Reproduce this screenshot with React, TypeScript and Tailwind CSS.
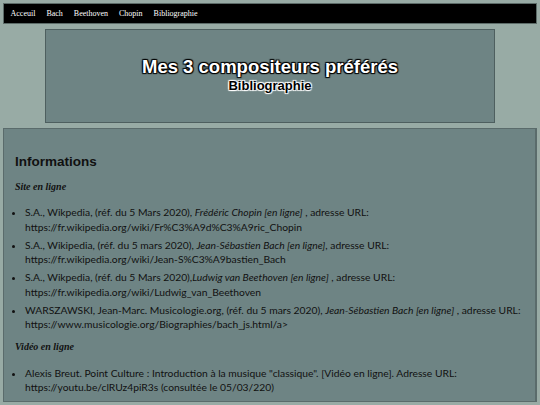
import React from "react";

export default function App() {
  const navItems = ["Acceuil", "Bach", "Beethoven", "Chopin", "Bibliographie"];
  return (
    <div className="w-[540px] h-[405px] overflow-hidden bg-[#98aba5] p-[3px] flex flex-col gap-[5px]">
      <nav className="h-[21px] bg-black border border-[#5c6b68] flex items-center px-[1px] font-['Liberation_Serif',serif] text-[8px] text-white shrink-0">
        {navItems.map((n) => (
          <span key={n} className="px-[5.5px]">
            {n}
          </span>
        ))}
      </nav>
      <header className="mx-auto w-[450px] h-[94px] bg-[#6e8484] border border-[#4e5f5f] flex flex-col items-center justify-center shrink-0 font-['Liberation_Sans',Arial,sans-serif] font-bold">
        <h1 className="-mt-[1px] text-[18.5px] leading-[20px] text-white [text-shadow:-1px_-1px_1px_#000,1px_-1px_1px_#000,-1px_1px_1px_#000,1px_1px_1px_#000]">
          Mes 3 compositeurs préférés
        </h1>
        <h2 className="text-[13px] leading-[18px] text-black [text-shadow:-1px_-1px_1px_#fff,1px_-1px_1px_#fff,-1px_1px_1px_#fff,1px_1px_1px_#fff]">
          Bibliographie
        </h2>
      </header>
      <main className="flex-1 bg-[#6e8484] border border-[#5a6b6b] border-r-2 px-[11px] pt-[24px] text-[#111]">
        <h3 className="font-['Liberation_Sans',Arial,sans-serif] font-bold text-[13.5px] leading-[18px]">
          Informations
        </h3>
        <h4 className="mt-[10px] font-['Liberation_Serif',serif] font-bold italic text-[10px] leading-[12px]">
          Site en ligne
        </h4>
        <ul className="mt-[12px] list-disc pl-[10px] whitespace-nowrap font-['Lato',sans-serif] text-[10.3px] leading-[14.5px] flex flex-col gap-[3.5px]">
          <li>
            S.A., Wikpedia, (réf. du 5 Mars 2020), <i>Frédéric Chopin [en ligne]</i> , adresse URL:
            <br />
            https://fr.wikipedia.org/wiki/Fr%C3%A9d%C3%A9ric_Chopin
          </li>
          <li>
            S.A., Wikipedia, (réf. du 5 mars 2020), <i>Jean-Sébastien Bach [en ligne]</i>, adresse URL:
            <br />
            https://fr.wikipedia.org/wiki/Jean-S%C3%A9bastien_Bach
          </li>
          <li>
            S.A., Wikpedia, (réf. du 5 Mars 2020),<i>Ludwig van Beethoven [en ligne]</i> , adresse URL:
            <br />
            https://fr.wikipedia.org/wiki/Ludwig_van_Beethoven
          </li>
          <li>
            WARSZAWSKI, Jean-Marc. Musicologie.org, (réf. du 5 mars 2020), <i>Jean-Sébastien Bach [en ligne]</i> , adresse URL:
            <br />
            https://www.musicologie.org/Biographies/bach_js.html/a&gt;
          </li>
        </ul>
        <h4 className="mt-[9px] font-['Liberation_Serif',serif] font-bold italic text-[10px] leading-[12px]">
          Vidéo en ligne
        </h4>
        <ul className="mt-[13px] list-disc pl-[10px] whitespace-nowrap font-['Lato',sans-serif] text-[10.3px] leading-[14.5px]">
          <li>
            Alexis Breut. Point Culture : Introduction à la musique "classique". [Vidéo en ligne]. Adresse URL:
            <br />
            https://youtu.be/clRUz4piR3s (consultée le 05/03/220)
          </li>
        </ul>
      </main>
    </div>
  );
}
